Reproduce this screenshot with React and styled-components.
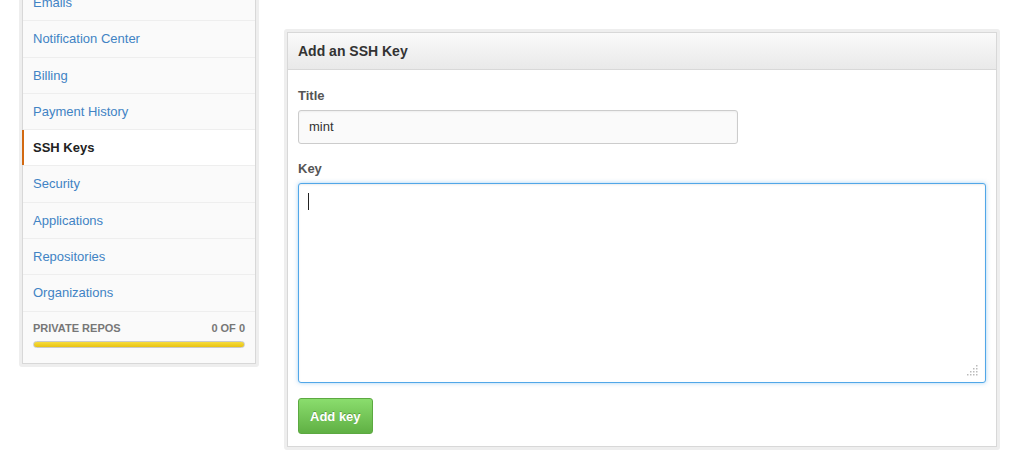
import React from "react";
import styled, { createGlobalStyle } from "styled-components";

const Global = createGlobalStyle`
  html, body { margin: 0; padding: 0; background: #fff; }
  body { font-family: "Liberation Sans", Arial, sans-serif; font-size: 13px; color: #333; overflow: hidden; }
`;

const Page = styled.div`
  display: flex;
  align-items: flex-start;
  gap: 25px;
  padding-left: 19px;
  width: 1017px;
  height: 459px;
  box-sizing: border-box;
`;

const Frame = styled.div`
  background: #eee;
  padding: 3px;
  border-radius: 3px;
  box-sizing: border-box;
`;

const SideFrame = styled(Frame)`
  width: 240px;
  margin-top: -19px;
`;

const SideMenu = styled.ul`
  list-style: none;
  margin: 0;
  padding: 0;
  background: #fafafa;
  border: 1px solid #d8d8d8;
`;

const MenuItem = styled.li`
  position: relative;
  height: 35.3px;
  line-height: 35.3px;
  padding-left: 10px;
  border-bottom: 1px solid #eee;
  font-size: 13px;
  color: ${(p) => (p.$active ? "#222" : "#4183c4")};
  font-weight: ${(p) => (p.$active ? "bold" : "normal")};
  background: ${(p) => (p.$active ? "#fff" : "transparent")};
  &::before {
    content: "";
    display: ${(p) => (p.$active ? "block" : "none")};
    position: absolute;
    left: -1px;
    top: 0;
    bottom: 0;
    width: 2px;
    background: #d26911;
  }
`;

const Footer = styled.li`
  padding: 10px 10px 15px;
`;

const FooterRow = styled.div`
  display: flex;
  justify-content: space-between;
  font-size: 11px;
  font-weight: bold;
  color: #777;
  line-height: 12px;
`;

const Bar = styled.div`
  margin-top: 7px;
  height: 5px;
  border: 1px solid #c9c9c9;
  border-radius: 4px;
  background: linear-gradient(#f6dc3d, #e9c312);
`;

const MainFrame = styled(Frame)`
  width: 716px;
  margin-top: 29px;
`;

const Box = styled.div`
  background: #fff;
  border: 1px solid #d8d8d8;
`;

const BoxHeader = styled.h3`
  margin: 0;
  height: 36px;
  line-height: 36px;
  padding: 0 10px;
  font-size: 14px;
  font-weight: bold;
  color: #333;
  background: linear-gradient(#fafafa, #e9e9e9);
  border-bottom: 1px solid #d8d8d8;
`;

const BoxBody = styled.form`
  padding: 16px 10px 12px;
`;

const Label = styled.label`
  display: block;
  font-size: 13px;
  font-weight: bold;
  color: #555;
  line-height: 19px;
  margin-bottom: ${(p) => p.$gap}px;
`;

const TextInput = styled.div`
  box-sizing: border-box;
  width: 440px;
  height: 34px;
  padding: 0 10px;
  line-height: 32px;
  font-size: 13px;
  color: #333;
  background: #fafafa;
  border: 1px solid #ccc;
  border-radius: 3px;
  box-shadow: inset 0 1px 2px rgba(0, 0, 0, 0.05);
  margin-bottom: 15px;
`;

const TextArea = styled.div`
  position: relative;
  box-sizing: border-box;
  width: 688px;
  height: 200px;
  padding: 9px 9px;
  background: #fff;
  border: 1px solid #51a7e8;
  border-radius: 3px;
  box-shadow: inset 0 1px 2px rgba(0, 0, 0, 0.075), 0 0 4px rgba(81, 167, 232, 0.5);
`;

const Caret = styled.span`
  display: block;
  width: 1px;
  height: 17px;
  background: #222;
`;

const Grip = styled.svg`
  position: absolute;
  right: 7px;
  bottom: 6px;
`;

const Button = styled.button`
  margin-top: 15px;
  height: 36px;
  padding: 0 11px;
  font-family: "Liberation Sans", Arial, sans-serif;
  font-size: 13px;
  font-weight: bold;
  color: #fff;
  text-shadow: 0 -1px 0 rgba(0, 0, 0, 0.25);
  background: linear-gradient(#8add6d, #60b044);
  border: 1px solid #5ca941;
  border-radius: 3px;
`;

const items = [
  "Emails",
  "Notification Center",
  "Billing",
  "Payment History",
  "SSH Keys",
  "Security",
  "Applications",
  "Repositories",
  "Organizations",
];

export default function App() {
  return (
    <>
      <Global />
      <Page>
        <SideFrame>
          <SideMenu>
            {items.map((it) => (
              <MenuItem key={it} $active={it === "SSH Keys"}>
                {it}
              </MenuItem>
            ))}
            <Footer>
              <FooterRow>
                <span>PRIVATE REPOS</span>
                <span>0 OF 0</span>
              </FooterRow>
              <Bar />
            </Footer>
          </SideMenu>
        </SideFrame>
        <MainFrame>
          <Box>
            <BoxHeader>Add an SSH Key</BoxHeader>
            <BoxBody>
              <Label $gap={5}>Title</Label>
              <TextInput>mint</TextInput>
              <Label $gap={5}>Key</Label>
              <TextArea>
                <Caret />
                <Grip width="12" height="12" viewBox="0 0 12 12">
                  {[
                    [10, 1], [10, 4], [7, 4], [10, 7], [7, 7], [4, 7], [10, 10], [7, 10], [4, 10], [1, 10],
                  ].map(([x, y], i) => (
                    <rect key={i} x={x} y={y} width="1.5" height="1.5" fill="#bbb" />
                  ))}
                </Grip>
              </TextArea>
              <Button type="button">Add key</Button>
            </BoxBody>
          </Box>
        </MainFrame>
      </Page>
    </>
  );
}
